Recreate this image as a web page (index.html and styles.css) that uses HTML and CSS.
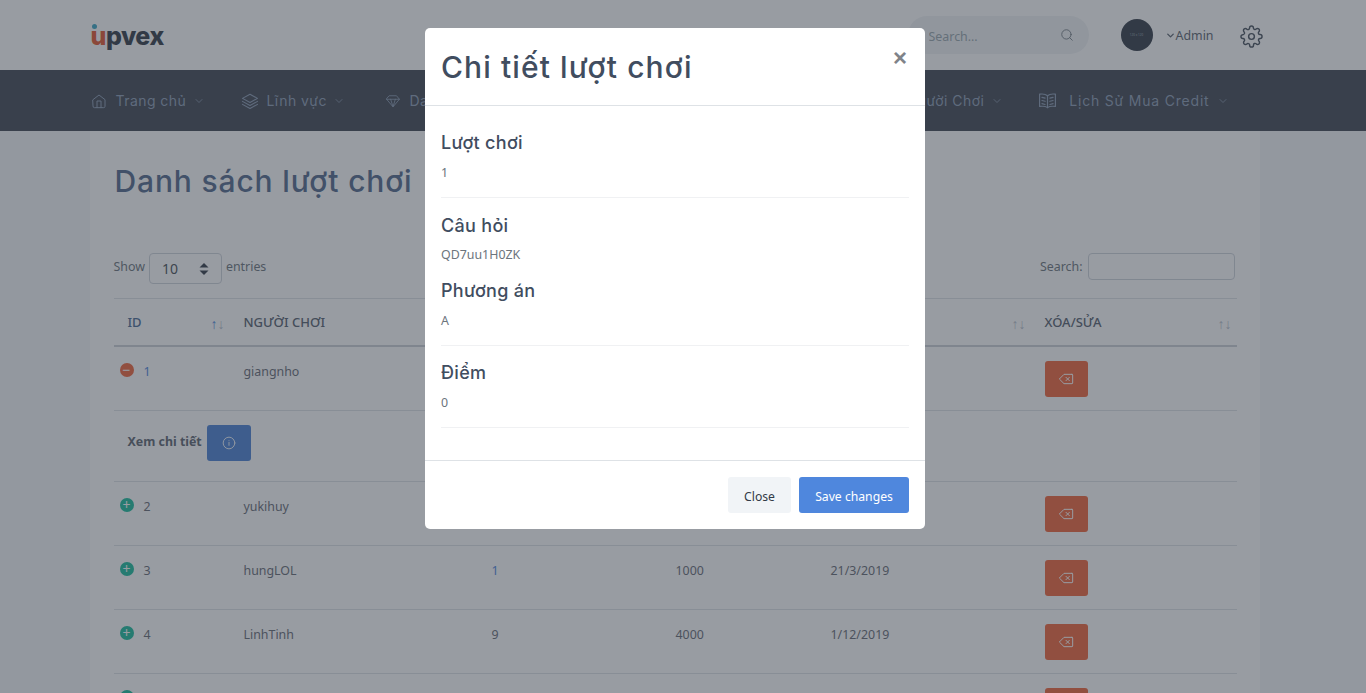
FILE: index.html
```html
<!DOCTYPE html>
<html lang="en">

<head>
    <meta charset="UTF-8">
    <meta name="viewport" content="width=device-width, initial-scale=1.0">
    <title>Danh sách lượt chơi</title>
    <link rel="stylesheet" href="styles.css">
</head>

<body>
    <header class="topbar">
        <div class="container topbar-inner">
            <a class="logo" href="#"><span class="logo-u">u</span>pvex</a>
            <div class="topbar-right">
                <div class="search-pill">
                    <input type="text" placeholder="Search...">
                    <svg class="icon" width="14" height="14" viewBox="0 0 24 24"><circle cx="11" cy="11" r="8"/><line x1="21" y1="21" x2="16.65" y2="16.65"/></svg>
                </div>
                <div class="avatar">120 x 120</div>
                <a class="user" href="#">
                    <svg class="icon user-chev" width="11" height="11" viewBox="0 0 24 24"><polyline points="6 9 12 15 18 9"/></svg>
                    Admin
                </a>
                <svg class="icon gear" width="23" height="23" viewBox="0 0 24 24"><circle cx="12" cy="12" r="3"/><path d="M19.4 15a1.65 1.65 0 0 0 .33 1.82l.06.06a2 2 0 0 1 0 2.83 2 2 0 0 1-2.83 0l-.06-.06a1.65 1.65 0 0 0-1.82-.33 1.65 1.65 0 0 0-1 1.51V21a2 2 0 0 1-2 2 2 2 0 0 1-2-2v-.09A1.65 1.65 0 0 0 9 19.4a1.65 1.65 0 0 0-1.82.33l-.06.06a2 2 0 0 1-2.83 0 2 2 0 0 1 0-2.83l.06-.06a1.65 1.65 0 0 0 .33-1.82 1.65 1.65 0 0 0-1.51-1H3a2 2 0 0 1-2-2 2 2 0 0 1 2-2h.09A1.65 1.65 0 0 0 4.6 9a1.65 1.65 0 0 0-.33-1.82l-.06-.06a2 2 0 0 1 0-2.83 2 2 0 0 1 2.83 0l.06.06a1.65 1.65 0 0 0 1.82.33H9a1.65 1.65 0 0 0 1-1.51V3a2 2 0 0 1 2-2 2 2 0 0 1 2 2v.09a1.65 1.65 0 0 0 1 1.51 1.65 1.65 0 0 0 1.82-.33l.06-.06a2 2 0 0 1 2.83 0 2 2 0 0 1 0 2.83l-.06.06a1.65 1.65 0 0 0-.33 1.82V9a1.65 1.65 0 0 0 1.51 1H21a2 2 0 0 1 2 2 2 2 0 0 1-2 2h-.09a1.65 1.65 0 0 0-1.51 1z"/></svg>
            </div>
        </div>
    </header>

    <nav class="navbar">
        <div class="container nav-inner">
            <a class="nav-item nav-home" href="#">
                <svg class="icon" width="16" height="16" viewBox="0 0 24 24"><path d="M3 10l9-7 9 7v10a2 2 0 0 1-2 2H5a2 2 0 0 1-2-2z"/><polyline points="9 22 9 12 15 12 15 22"/></svg>
                Trang chủ
                <svg class="icon chev" width="12" height="12" viewBox="0 0 24 24"><polyline points="6 9 12 15 18 9"/></svg>
            </a>
            <a class="nav-item nav-field" href="#">
                <svg class="icon" width="18" height="18" viewBox="0 0 24 24"><polygon points="12 3 22 8.500 12 14 2 8.500"/><polyline points="2 12.500 12 18 22 12.500"/><polyline points="2 16.500 12 22 22 16.500"/></svg>
                Lĩnh vực
                <svg class="icon chev" width="12" height="12" viewBox="0 0 24 24"><polyline points="6 9 12 15 18 9"/></svg>
            </a>
            <a class="nav-item nav-list" href="#">
                <svg class="icon" width="14" height="14" viewBox="0 0 24 24"><polygon points="6 3 18 3 23 9 12 22 1 9"/><polyline points="1 9 23 9"/><polyline points="8 9 12 22 16 9"/></svg>
                Danh sách
            </a>
            <a class="nav-item nav-player" href="#">
                Người Chơi
                <svg class="icon chev" width="12" height="12" viewBox="0 0 24 24"><polyline points="6 9 12 15 18 9"/></svg>
            </a>
            <a class="nav-item" href="#">
                <svg class="icon" width="19" height="19" viewBox="0 0 24 24"><path d="M12 6C10 4 6 3.500 2 4v15.500c4-.5 8 0 10 1.500 2-1.500 6-2 10-1.500V4c-4-.5-8 0-10 2z"/><line x1="12" y1="6" x2="12" y2="21"/><line x1="5" y1="8" x2="9" y2="9"/><line x1="5" y1="12" x2="9" y2="13"/><line x1="5" y1="16" x2="9" y2="17"/><line x1="19" y1="8" x2="15" y2="9"/><line x1="19" y1="12" x2="15" y2="13"/><line x1="19" y1="16" x2="15" y2="17"/></svg>
                <span class="nav-credit">Lịch Sử Mua Credit</span>
                <svg class="icon chev" width="12" height="12" viewBox="0 0 24 24"><polyline points="6 9 12 15 18 9"/></svg>
            </a>
        </div>
    </nav>

    <main class="container card">
        <h2 class="page-title">Danh sách lượt chơi</h2>

        <div class="table-tools">
            <label class="tool">Show
                <span class="select-box">10
                    <svg width="10" height="14" viewBox="0 0 10 14"><polygon points="5 1 9.500 5.500 .5 5.500"/><polygon points="5 13 9.500 8.500 .5 8.500"/></svg>
                </span>
                entries</label>
            <label class="tool search-tool">Search: <input class="search-input" type="search"></label>
        </div>

        <table class="data-table">
            <colgroup>
                <col class="col-id"><col class="col-name"><col class="col-turns"><col class="col-score"><col class="col-date"><col class="col-action">
            </colgroup>
            <thead>
                <tr>
                    <th class="sort-active">ID<span class="sort"><b>↑</b>↓</span></th>
                    <th>NGƯỜI CHƠI</th>
                    <th></th>
                    <th></th>
                    <th><span class="sort">↑↓</span></th>
                    <th>XÓA/SỬA<span class="sort">↑↓</span></th>
                </tr>
            </thead>
            <tbody>
                <tr class="open-row">
                    <td class="id-cell"><span class="toggle toggle-open">−</span><span class="link">1</span></td>
                    <td>giangnho</td>
                    <td></td>
                    <td></td>
                    <td></td>
                    <td><button class="btn-del"><svg class="icon" width="16" height="16" viewBox="0 0 24 24"><path d="M21 5H9l-7 7 7 7h12a1 1 0 0 0 1-1V6a1 1 0 0 0-1-1z"/><line x1="17" y1="9.500" x2="12" y2="14.500"/><line x1="12" y1="9.500" x2="17" y2="14.500"/></svg></button></td>
                </tr>
                <tr class="detail-row">
                    <td colspan="6"><b>Xem chi tiết</b> <button class="btn-info"><svg class="icon" width="14" height="14" viewBox="0 0 24 24"><circle cx="12" cy="12" r="10"/><line x1="12" y1="16" x2="12" y2="11"/><line x1="12" y1="8" x2="12" y2="8"/></svg></button></td>
                </tr>
                <tr>
                    <td class="id-cell"><span class="toggle">+</span>2</td>
                    <td>yukihuy</td>
                    <td></td>
                    <td></td>
                    <td></td>
                    <td><button class="btn-del"><svg class="icon" width="16" height="16" viewBox="0 0 24 24"><path d="M21 5H9l-7 7 7 7h12a1 1 0 0 0 1-1V6a1 1 0 0 0-1-1z"/><line x1="17" y1="9.500" x2="12" y2="14.500"/><line x1="12" y1="9.500" x2="17" y2="14.500"/></svg></button></td>
                </tr>
                <tr>
                    <td class="id-cell"><span class="toggle">+</span>3</td>
                    <td>hungLOL</td>
                    <td class="link">1</td>
                    <td>1000</td>
                    <td>21/3/2019</td>
                    <td><button class="btn-del"><svg class="icon" width="16" height="16" viewBox="0 0 24 24"><path d="M21 5H9l-7 7 7 7h12a1 1 0 0 0 1-1V6a1 1 0 0 0-1-1z"/><line x1="17" y1="9.500" x2="12" y2="14.500"/><line x1="12" y1="9.500" x2="17" y2="14.500"/></svg></button></td>
                </tr>
                <tr>
                    <td class="id-cell"><span class="toggle">+</span>4</td>
                    <td>LinhTinh</td>
                    <td>9</td>
                    <td>4000</td>
                    <td>1/12/2019</td>
                    <td><button class="btn-del"><svg class="icon" width="16" height="16" viewBox="0 0 24 24"><path d="M21 5H9l-7 7 7 7h12a1 1 0 0 0 1-1V6a1 1 0 0 0-1-1z"/><line x1="17" y1="9.500" x2="12" y2="14.500"/><line x1="12" y1="9.500" x2="17" y2="14.500"/></svg></button></td>
                </tr>
                <tr>
                    <td class="id-cell"><span class="toggle"></span></td>
                    <td></td>
                    <td></td>
                    <td></td>
                    <td></td>
                    <td><button class="btn-del"></button></td>
                </tr>
            </tbody>
        </table>
    </main>

    <div class="backdrop"></div>

    <div class="modal">
        <div class="modal-header">
            <h3>Chi tiết lượt chơi</h3>
            <span class="close">×</span>
        </div>
        <div class="modal-body">
            <h4>Lượt chơi</h4>
            <p>1</p>
            <hr>
            <h4>Câu hỏi</h4>
            <p class="tight">QD7uu1H0ZK</p>
            <h4>Phương án</h4>
            <p>A</p>
            <hr class="hr-short">
            <h4>Điểm</h4>
            <p>0</p>
            <hr>
        </div>
        <div class="modal-footer">
            <button class="btn-light">Close</button>
            <button class="btn-primary">Save changes</button>
        </div>
    </div>
</body>

</html>
```

FILE: styles.css
```css
* {
    box-sizing: border-box;
}
html,
body {
    height: 100%;
    overflow: hidden;
}
body {
    margin: 0;
    padding-right: 17px;
    background: #f5f6f8;
    font-family: "Noto Sans", sans-serif;
    font-size: 12.4px;
    color: #6c757d;
}
a {
    color: inherit;
    text-decoration: none;
}
.icon {
    fill: none;
    stroke: currentColor;
    stroke-width: 1.5;
    stroke-linecap: round;
    stroke-linejoin: round;
    flex: none;
}
.container {
    width: 1170px;
    margin: 0 auto;
}

/* top bar */
.topbar {
    background: #fff;
    height: 70px;
    margin-right: -17px;
    padding-right: 17px;
}
.topbar-inner {
    height: 70px;
    display: flex;
    align-items: center;
    justify-content: space-between;
}
.logo {
    font-family: Inter, sans-serif;
    font-weight: 800;
    font-size: 25px;
    letter-spacing: -.5px;
    color: #323a46;
    position: relative;
    margin: 2px 0 0 1px;
}
.logo-u {
    color: #e4572e;
}
.logo-u::before {
    content: "";
    position: absolute;
    left: 1px;
    top: 3px;
    width: 5px;
    height: 5px;
    border-radius: 50%;
    background: #3ba6c4;
}
.topbar-right {
    display: flex;
    align-items: center;
    margin-right: -3px;
}
.search-pill {
    width: 181px;
    height: 38px;
    background: #f1f3f5;
    border-radius: 30px;
    display: flex;
    align-items: center;
    padding: 0 15px 0 21px;
    color: #6c757d;
}
.search-pill input {
    flex: 1;
    min-width: 0;
    border: 0;
    background: none;
    outline: 0;
    font: inherit;
    padding: 2px 0 0;
}
.search-pill input::placeholder {
    color: #98a6ad;
}
.avatar {
    width: 32px;
    height: 32px;
    margin-left: 32px;
    border-radius: 50%;
    background: #323a46;
    color: #98a6ad;
    font-size: 3px;
    display: flex;
    align-items: center;
    justify-content: center;
}
.user {
    display: flex;
    align-items: center;
    margin-left: 12px;
    color: #5a636e;
}
.user-chev {
    stroke-width: 3;
}
.gear {
    margin: 3px 0 0 26px;
    color: #47505c;
}

/* nav */
.navbar {
    background: #404652;
    height: 61px;
    margin-right: -17px;
    padding-right: 17px;
    color: #8c9db5;
    font-family: Inter, sans-serif;
    font-size: 14px;
    letter-spacing: .45px;
}
.nav-inner {
    height: 61px;
    display: flex;
    align-items: center;
    padding-right: 31px;
}
.nav-item {
    display: flex;
    align-items: center;
    gap: 7px;
    white-space: nowrap;
}
.nav-home {
    width: 150px;
    padding-left: 1px;
    gap: 9px;
}
.nav-field {
    width: 145px;
    padding-left: 1px;
    gap: 8px;
}
.nav-list {
    width: 100px;
    padding-left: 1px;
    gap: 10px;
}
.nav-player {
    margin-left: auto;
    margin-right: 35px;
}
.nav-credit {
    margin-left: 5px;
    letter-spacing: .8px;
}
.nav-home .chev,
.nav-field .chev {
    margin-left: -2px;
}

/* content */
.card {
    background: #fff;
    height: 562px;
    overflow: hidden;
    padding: 28px 22px 0 24px;
}
.page-title {
    margin: 0 0 0 1px;
    font-family: Inter, sans-serif;
    font-size: 30px;
    line-height: 44px;
    font-weight: 500;
    letter-spacing: .85px;
    color: #52698c;
}
.table-tools {
    display: flex;
    justify-content: space-between;
    align-items: flex-start;
    margin-top: 50px;
    height: 45px;
}
.tool {
    display: flex;
    align-items: flex-start;
    gap: 4px;
    line-height: 27px;
}
.search-tool {
    gap: 5px;
}
.select-box {
    width: 73px;
    height: 31px;
    border: 1px solid #ced4da;
    border-radius: 4px;
    padding: 0 12px;
    font-size: 14px;
    line-height: 31px;
    color: #495057;
    display: flex;
    align-items: center;
    justify-content: space-between;
}
.select-box svg {
    fill: #323a46;
}
.search-input {
    width: 147px;
    height: 27px;
    border: 1px solid #ced4da;
    border-radius: 4px;
    background: #fff;
    margin-right: 3px;
}

/* table */
.data-table {
    width: 1123px;
    table-layout: fixed;
    border-collapse: collapse;
    border-top: 1px solid #dee2e6;
}
.col-id { width: 116px; }
.col-name { width: 248px; }
.col-turns { width: 184px; }
.col-score { width: 155px; }
.col-date { width: 214px; }
.col-action { width: 206px; }
.data-table th {
    position: relative;
    height: 47px;
    padding: 0 14px;
    text-align: left;
    font-weight: 500;
    font-size: 13px;
    color: #56606e;
    border-bottom: 2px solid #ccd0d6;
}
.data-table th.sort-active {
    color: #4a6a94;
}
.sort {
    position: absolute;
    right: 5px;
    top: 15px;
    font-size: 14px;
    font-weight: 400;
    color: #b8c0cb;
}
.sort b {
    font-weight: 400;
    color: #4f87dd;
}
.data-table td {
    height: 64px;
    padding: 16px 14px 11px;
    vertical-align: top;
    line-height: 18px;
    color: #676b75;
    border-bottom: 1px solid #dee2e6;
}
.data-table td:last-child {
    padding-top: 14px;
}
.data-table .open-row td {
    height: 65px;
}
.data-table td.id-cell {
    position: relative;
    padding-left: 30px;
}
.toggle {
    position: absolute;
    left: 6px;
    top: 16px;
    width: 14px;
    height: 14px;
    border-radius: 50%;
    background: #1abc9c;
    color: #fff;
    font-size: 14px;
    font-weight: 400;
    line-height: 13px;
    text-align: center;
}
.toggle-open {
    background: #f1643a;
}
.data-table .link,
.link {
    color: #4f87dd;
}
.data-table .detail-row td {
    height: 71px;
    padding: 14px;
}
.detail-row b {
    color: #5d6570;
    line-height: 34px;
}
button {
    border: 0;
    border-radius: 3px;
    cursor: pointer;
    font: inherit;
}
.btn-del,
.btn-info {
    height: 36px;
    display: inline-flex;
    align-items: center;
    justify-content: center;
    color: #fff;
    vertical-align: top;
}
.btn-del {
    width: 43px;
    background: #f1643a;
}
.btn-info {
    width: 44px;
    margin-left: 2px;
    background: #4a81d4;
}

/* modal */
.backdrop {
    position: fixed;
    inset: 0;
    background: rgba(50, 58, 70, .5);
}
.modal {
    position: fixed;
    left: 425px;
    top: 28px;
    width: 500px;
    background: #fff;
    border-radius: 5px;
}
.modal-header {
    height: 78px;
    padding: 0 16px;
    border-bottom: 1px solid #dee2e6;
    display: flex;
    align-items: center;
    justify-content: space-between;
}
.modal-header h3 {
    margin: 0;
    font-family: Inter, sans-serif;
    font-size: 30px;
    font-weight: 500;
    letter-spacing: 1.1px;
    color: #414d5f;
}
.close {
    font-family: "Liberation Sans", sans-serif;
    font-size: 24px;
    font-weight: 700;
    color: #7f8389;
    margin: -18px 2px 0 0;
}
.modal-body {
    height: 355px;
    padding: 25px 16px 0;
    border-bottom: 1px solid #dee2e6;
}
.modal-body h4 {
    margin: 0;
    font-family: Inter, sans-serif;
    font-size: 18px;
    line-height: 24px;
    font-weight: 500;
    letter-spacing: .3px;
    color: #414d5f;
}
.modal-body p {
    margin: 8px 0 0;
    line-height: 20px;
}
.modal-body p.tight {
    margin: 7px 0 14px;
}
.modal-body hr {
    border: 0;
    border-top: 1px solid #f0f1f3;
    margin: 14px 0 16px;
}
.modal-body hr.hr-short {
    margin-bottom: 15px;
}
.modal-footer {
    display: flex;
    justify-content: flex-end;
    gap: 8px;
    padding: 16px;
}
.modal-footer button {
    height: 36px;
    padding: 2px 0 0;
    font-size: 12.2px;
}
.btn-light {
    width: 63px;
    background: #f1f4f7;
    color: #323a46;
}
.btn-primary {
    width: 110px;
    background: #4f87dd;
    color: #fff;
}
```
